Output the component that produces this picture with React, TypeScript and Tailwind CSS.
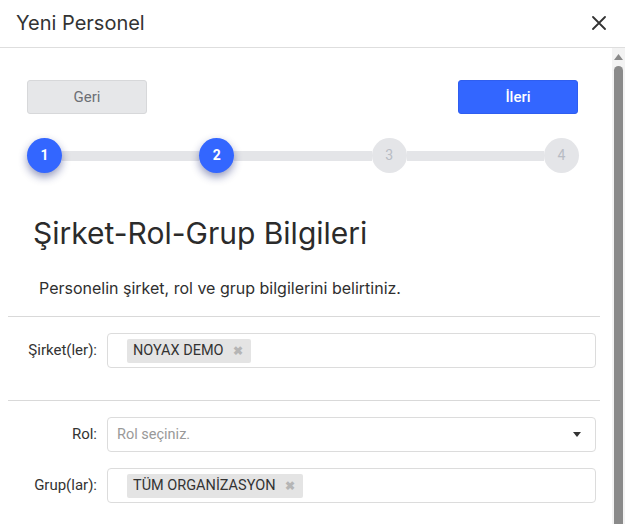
import React from "react";

function Step({ n, active }: { n: number; active: boolean }) {
  return (
    <div
      className={
        active
          ? "w-[35px] h-[35px] rounded-full bg-[#3366ff] text-white font-bold text-[14px] flex items-center justify-center shrink-0 shadow-[0_4px_9px_rgba(20,30,110,0.45)] z-10"
          : "w-[35px] h-[35px] rounded-full bg-[#e4e5e8] text-[#b8bcc4] text-[14px] flex items-center justify-center shrink-0 z-10"
      }
      style={{ fontFamily: "Roboto, sans-serif" }}
    >
      {n}
    </div>
  );
}

function Line() {
  return <div className="flex-1 h-[10px] bg-[#e4e5e8]" />;
}

function Tag({ text }: { text: string }) {
  return (
    <span className="inline-flex items-center h-[24px] bg-[#e4e4e4] rounded-[2px] pl-[6px] pr-[8px] text-[14.5px] text-[#333]">
      {text}
      <span className="ml-[9px] text-[#b5b5b5] text-[12px] font-bold">✖</span>
    </span>
  );
}

export default function App() {
  const roboto = { fontFamily: "Roboto, 'Liberation Sans', sans-serif" };
  const inter = { fontFamily: "Inter, 'Liberation Sans', sans-serif" };
  return (
    <div className="w-[625px] h-[524px] bg-white flex flex-col overflow-hidden" style={inter}>
      <div className="h-[48px] shrink-0 border-b border-[#dedede] flex items-center justify-between pl-[16px] pr-[19px] pb-[2px]">
        <span className="text-[20px] text-[#333]" style={inter}>Yeni Personel</span>
        <svg width="14" height="14" viewBox="0 0 14 14" className="mt-[1px]">
          <path d="M1 1L13 13M13 1L1 13" stroke="#333" strokeWidth="1.8" strokeLinecap="round" />
        </svg>
      </div>
      <div className="flex-1 flex flex-row min-h-0">
        <div className="flex-1 flex flex-col">
          <div className="flex justify-between pl-[27px] pr-[34px] pt-[32px]" style={roboto}>
            <button className="w-[120px] h-[34px] rounded-[3px] bg-[#e6e7e9] border border-[#d7d8da] text-[#6c6f75] text-[15px]">
              Geri
            </button>
            <button className="w-[120px] h-[34px] rounded-[3px] bg-[#3366ff] border border-[#2f5ef0] text-white text-[15px] font-medium">
              İleri
            </button>
          </div>
          <div className="flex items-center pl-[27px] pr-[33px] mt-[24px]">
            <Step n={1} active />
            <Line />
            <Step n={2} active />
            <Line />
            <Step n={3} active={false} />
            <Line />
            <Step n={4} active={false} />
          </div>
          <h2 className="pl-[33px] mt-[41px] text-[30px] leading-[38px] text-[#2b2b2b]" style={inter}>
            Şirket-Rol-Grup Bilgileri
          </h2>
          <p className="pl-[39px] mt-[26px] text-[16px] leading-[20px] text-[#2f2f2f]" style={inter}>
            Personelin şirket, rol ve grup bilgilerini belirtiniz.
          </p>
          <div className="ml-[8px] mr-[12px] mt-[18px] border-t border-[#d9d9d9]" />
          <div className="flex items-center mt-[16px] pr-[16px]" style={roboto}>
            <label className="w-[107px] pr-[10px] text-right text-[15px] text-[#333]">Şirket(ler):</label>
            <div className="flex-1 h-[35px] border border-[#dcdcdc] rounded-[4px] flex items-center pl-[19px]">
              <Tag text="NOYAX DEMO" />
            </div>
          </div>
          <div className="ml-[8px] mr-[12px] mt-[32px] border-t border-[#d9d9d9]" />
          <div className="flex items-center mt-[16px] pr-[16px]" style={roboto}>
            <label className="w-[107px] pr-[10px] text-right text-[15px] text-[#333]">Rol:</label>
            <div className="flex-1 h-[35px] border border-[#dcdcdc] rounded-[4px] flex items-center justify-between pl-[9px] pr-[14px]">
              <span className="text-[14.5px] text-[#999]">Rol seçiniz.</span>
              <svg width="8" height="5" viewBox="0 0 8 5">
                <path d="M0 0H8L4 5Z" fill="#333" />
              </svg>
            </div>
          </div>
          <div className="flex items-center mt-[16px] pr-[16px]" style={roboto}>
            <label className="w-[107px] pr-[10px] text-right text-[15px] text-[#333]">Grup(lar):</label>
            <div className="flex-1 h-[35px] border border-[#dcdcdc] rounded-[4px] flex items-center pl-[19px]">
              <Tag text="TÜM ORGANİZASYON" />
            </div>
          </div>
        </div>
        <div className="w-[13px] shrink-0 bg-[#f3f3f3] flex flex-col items-center">
          <svg width="9" height="6" viewBox="0 0 9 6" className="mt-[6px]">
            <path d="M0 6H9L4.5 0Z" fill="#8a8a8a" />
          </svg>
          <div className="mt-[6px] w-[9px] flex-1 bg-[#8a8a8a] rounded-t-full" />
        </div>
      </div>
    </div>
  );
}
